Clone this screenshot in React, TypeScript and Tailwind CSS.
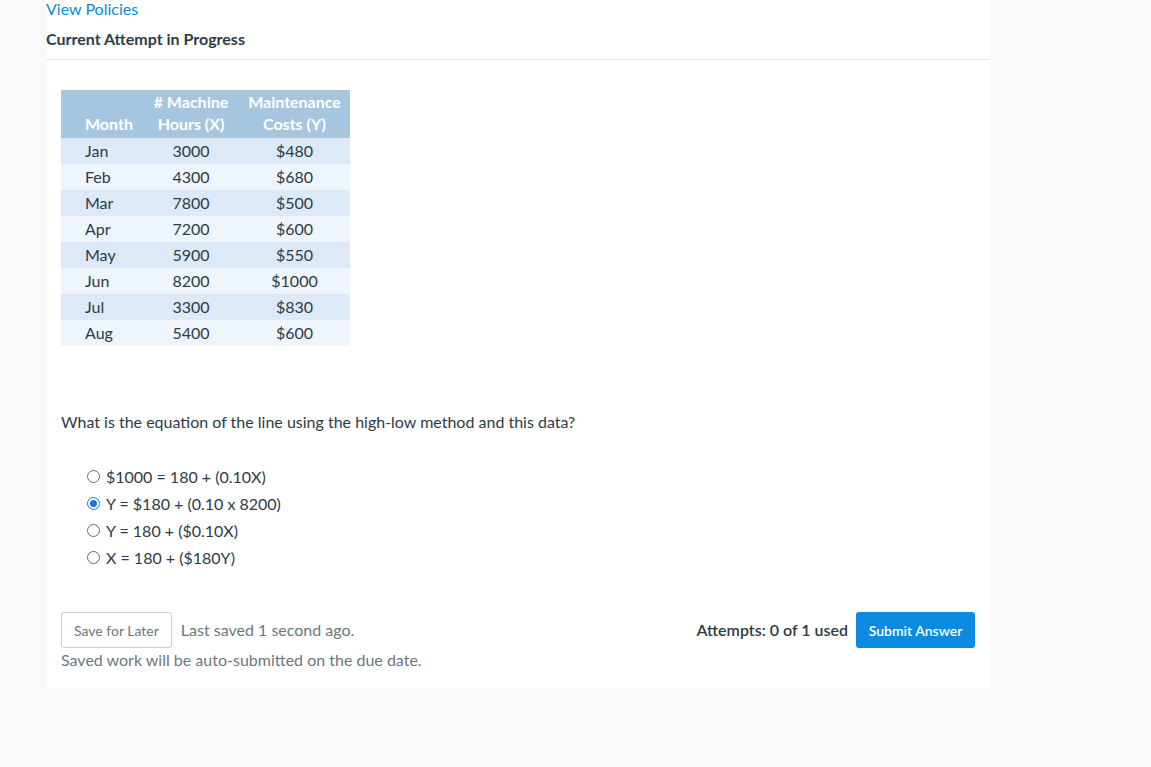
import React from "react";

const rows = [
  ["Jan", "3000", "$480"],
  ["Feb", "4300", "$680"],
  ["Mar", "7800", "$500"],
  ["Apr", "7200", "$600"],
  ["May", "5900", "$550"],
  ["Jun", "8200", "$1000"],
  ["Jul", "3300", "$830"],
  ["Aug", "5400", "$600"],
];

const options = [
  "$1000 = 180 + (0.10X)",
  "Y = $180 + (0.10 x 8200)",
  "Y = 180 + ($0.10X)",
  "X = 180 + ($180Y)",
];

function Radio({ checked }: { checked: boolean }) {
  return checked ? (
    <span className="w-[13px] h-[13px] rounded-full border-[1.5px] border-[#1a73e8] flex items-center justify-center bg-white">
      <span className="w-[7px] h-[7px] rounded-full bg-[#1a73e8]" />
    </span>
  ) : (
    <span className="w-[13px] h-[13px] rounded-full border border-[#6b6b6b] bg-white" />
  );
}

export default function App() {
  return (
    <div
      className="min-h-[767px] w-full bg-[#f9f9f9] text-[#2d3b45]"
      style={{ fontFamily: "Lato, 'Noto Sans', sans-serif" }}
    >
      <div className="ml-[46px] w-[944px] bg-white h-[688px] flex flex-col">
        <div className="pt-0">
          <div className="text-[16px] leading-[18px] text-[#0b8ae0]">View Policies</div>
          <div className="mt-[11px] text-[16px] leading-[19px] font-bold text-[#2d3b45]">
            Current Attempt in Progress
          </div>
          <div className="mt-[11px] h-px bg-[#e5e5e5]" />
        </div>
        <div className="px-[15px] pt-[30px]">
          <table className="w-[289px] border-collapse text-[16px]">
            <thead>
              <tr className="bg-[#a6c6e0] text-white font-bold">
                <th className="h-[48px] align-bottom pb-[3px] pl-[24px] text-left w-[82px] leading-[22px] font-bold">Month</th>
                <th className="h-[48px] align-bottom pb-[3px] text-center w-[96px] leading-[22px] font-bold">
                  # Machine<br />Hours (X)
                </th>
                <th className="h-[48px] align-bottom pb-[3px] text-center leading-[22px] font-bold">
                  Maintenance<br />Costs (Y)
                </th>
              </tr>
            </thead>
            <tbody className="text-[#2d3b45]">
              {rows.map((r, i) => (
                <tr key={r[0]} className={i % 2 === 0 ? "bg-[#dde9f7]" : "bg-[#eef5fd]"}>
                  <td className="h-[26px] pl-[24px] text-left">{r[0]}</td>
                  <td className="h-[26px] text-center">{r[1]}</td>
                  <td className="h-[26px] text-center">{r[2]}</td>
                </tr>
              ))}
            </tbody>
          </table>
          <div className="mt-[66px] text-[16px] leading-[20px]">
            What is the equation of the line using the high-low method and this data?
          </div>
          <div className="mt-[31px] pl-[26px] flex flex-col">
            {options.map((o, i) => (
              <label key={o} className="flex items-center gap-[6px] h-[27px] text-[16px]">
                <Radio checked={i === 1} />
                <span>{o}</span>
              </label>
            ))}
          </div>
          <div className="mt-[41px] flex items-center justify-between">
            <div className="flex items-center gap-[9px]">
              <button className="h-[36px] px-[12px] border border-[#c7cdd1] rounded-[3px] bg-white text-[14px] text-[#6b7780]">
                Save for Later
              </button>
              <span className="text-[16px] text-[#6b7780]">Last saved 1 second ago.</span>
            </div>
            <div className="flex items-center gap-[8px]">
              <span className="text-[16px] font-semibold text-[#2d3b45]">Attempts: 0 of 1 used</span>
              <button className="h-[36px] w-[119px] rounded-[3px] bg-[#0b8ae0] text-white text-[14px] font-semibold">
                Submit Answer
              </button>
            </div>
          </div>
          <div className="mt-[0px] text-[16px] text-[#6b7780]">
            Saved work will be auto-submitted on the due date.
          </div>
        </div>
      </div>
    </div>
  );
}
